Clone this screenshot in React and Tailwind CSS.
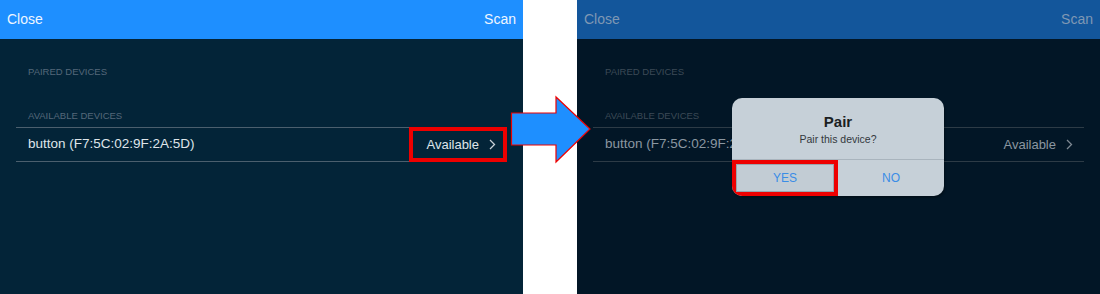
const font = { fontFamily: '"Liberation Sans", Arial, sans-serif' };

function Chevron({ className }) {
  return (
    <svg width="7" height="11" viewBox="0 0 7 11" className={className}>
      <polyline points="1,1 5.5,5.5 1,10" fill="none" stroke="currentColor" strokeWidth="1.3" />
    </svg>
  );
}

function Panel({ dim, boxed, children }) {
  return (
    <div className={`relative flex h-full w-[523px] shrink-0 flex-col ${dim ? 'bg-[#021626]' : 'bg-[#032438]'}`}>
      <div
        className={`flex h-[39px] items-center justify-between pl-[7px] pr-[7px] text-[14px] ${
          dim ? 'bg-[#13569b] text-[#7f98b4]' : 'bg-[#1e8fff] text-[#eef6ff]'
        }`}
      >
        <span>Close</span>
        <span>Scan</span>
      </div>

      <div className={`pl-[28px] pt-[26px] text-[9.5px] uppercase leading-[14px] ${dim ? 'text-[#3c4a56]' : 'text-[#55687a]'}`}>
        Paired devices
      </div>
      <div className={`pl-[28px] pt-[30px] text-[9.5px] uppercase leading-[14px] ${dim ? 'text-[#3c4a56]' : 'text-[#55687a]'}`}>
        Available devices
      </div>

      <div
        className={`mx-4 mt-[4px] flex h-[35px] items-center justify-between border-y pl-3 text-[13.5px] ${
          dim ? 'border-[#2d3b46] text-[#8b97a1]' : 'border-[#4b5f6e] text-[#dfe5ea]'
        }`}
      >
        <span>button (F7:5C:02:9F:2A:5D)</span>
        <span
          className={`-my-px flex items-center gap-[10px] self-stretch border-4 pl-[13px] pr-[7px] text-[13px] ${
            boxed ? 'border-[#ee0000]' : 'border-transparent'
          }`}
        >
          <span>Available</span>
          <Chevron className={dim ? 'text-[#7d8892]' : 'text-[#c8d0d7]'} />
        </span>
      </div>
      {children}
    </div>
  );
}

function Arrow() {
  return (
    <svg width="84" height="70" viewBox="0 0 84 70" className="absolute left-[509px] top-[95px]">
      <polygon
        points="2.5,18 47,18 47,2 81,34 47,67 47,50 2.5,50"
        fill="#1e8fff"
        stroke="#ee0000"
        strokeWidth="1.2"
      />
    </svg>
  );
}

function PairDialog() {
  return (
    <div className="absolute left-[155px] top-[98px] flex h-[98px] w-[212px] flex-col overflow-hidden rounded-[10px] bg-[#c6d0d8] shadow-[1px_2px_2px_rgba(0,0,0,0.3)]">
      <div className="flex flex-col items-center pt-[15px]">
        <span className="text-[15px] font-bold leading-[18px] text-[#1b1f23]">Pair</span>
        <span className="mt-[1px] text-[10.5px] leading-[15px] text-[#33383d]">Pair this device?</span>
      </div>
      <div className="mt-auto flex h-[37px] border-t border-[#a9b4bd]">
        <div className="flex w-[106px] items-center justify-center border-4 border-[#ee0000] text-[12px] text-[#3a8de6]">
          <span className="flex h-full w-full items-center justify-center border border-[#9aa5ae] bg-[#c2ccd4]">YES</span>
        </div>
        <div className="flex flex-1 items-center justify-center text-[12px] text-[#3a8de6]">NO</div>
      </div>
    </div>
  );
}

export default function App() {
  return (
    <div className="relative flex h-[294px] w-[1100px] overflow-hidden bg-white" style={font}>
      <Panel boxed />
      <div className="w-[54px] shrink-0 bg-white" />
      <Panel dim>
        <PairDialog />
      </Panel>
      <Arrow />
    </div>
  );
}
